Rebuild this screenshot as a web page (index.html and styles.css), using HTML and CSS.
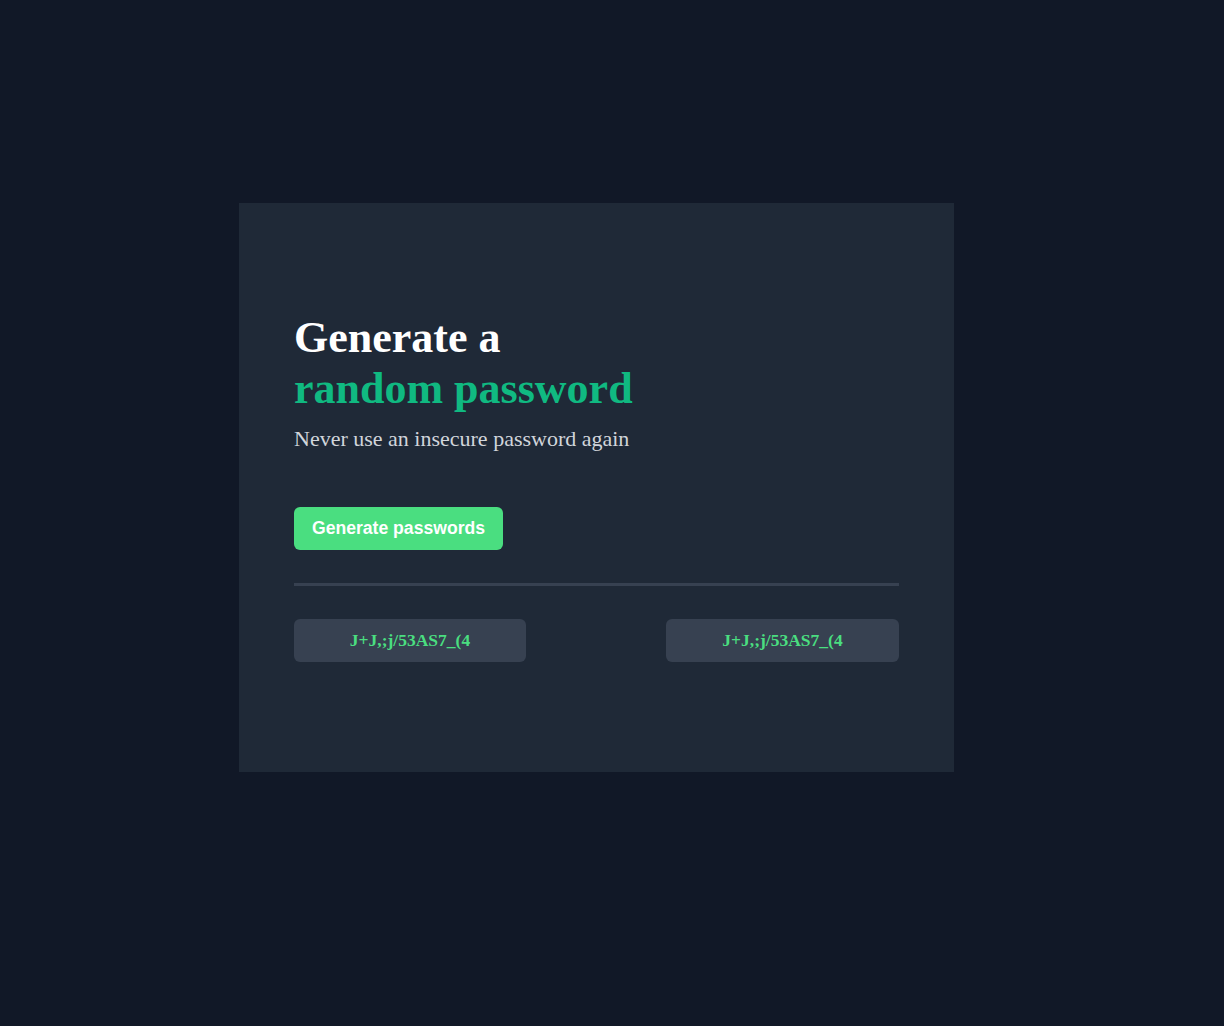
FILE: index.html
```html
<!DOCTYPE html>
<html lang="en">
<head>
<meta charset="utf-8">
<title>Password Generator</title>
<link rel="stylesheet" href="styles.css">
</head>
<body>
<div class="page">
  <main class="card">
    <h1 class="title">Generate a<br><span class="accent">random password</span></h1>
    <p class="subtitle">Never use an insecure password again</p>
    <button class="generate" type="button">Generate passwords</button>
    <hr class="divider">
    <div class="results">
      <div class="pw">J+J,;j/53AS7_(4</div>
      <div class="pw">J+J,;j/53AS7_(4</div>
    </div>
  </main>
</div>
</body>
</html>
```
FILE: styles.css
```css
html, body {
  margin: 0;
  padding: 0;
  background: #111827;
  font-family: "Liberation Serif", "Times New Roman", serif;
}
.page {
  min-height: 1026px;
  box-sizing: border-box;
  padding: 203px 0 0 239px;
}
.card {
  width: 715px;
  height: 569px;
  box-sizing: border-box;
  background: #1f2937;
  padding: 109px 55px 0 55px;
  display: flex;
  flex-direction: column;
}
.title {
  margin: 0;
  font-size: 44px;
  font-weight: 700;
  color: #ffffff;
  line-height: 51px;
}
.accent {
  color: #10b981;
}
.subtitle {
  margin: 12px 0 0 0;
  font-size: 22px;
  color: #d1d5db;
  line-height: 26px;
}
.generate {
  align-self: flex-start;
  margin-top: 55px;
  height: 43px;
  width: 209px;
  padding: 0;
  border: none;
  border-radius: 6px;
  background: #4ade80;
  color: #ffffff;
  font-family: "Liberation Sans", Arial, sans-serif;
  font-weight: 700;
  font-size: 17.6px;
}
.divider {
  margin: 33px 0 0 0;
  border: none;
  height: 3px;
  background: #374151;
}
.results {
  margin-top: 33px;
  display: flex;
  justify-content: space-between;
}
.pw {
  width: 232px;
  height: 43px;
  border-radius: 6px;
  background: #374151;
  color: #4ade80;
  font-weight: 700;
  font-size: 17.5px;
  display: flex;
  align-items: center;
  justify-content: center;
}
.pw + .pw {
  width: 233px;
}
```
